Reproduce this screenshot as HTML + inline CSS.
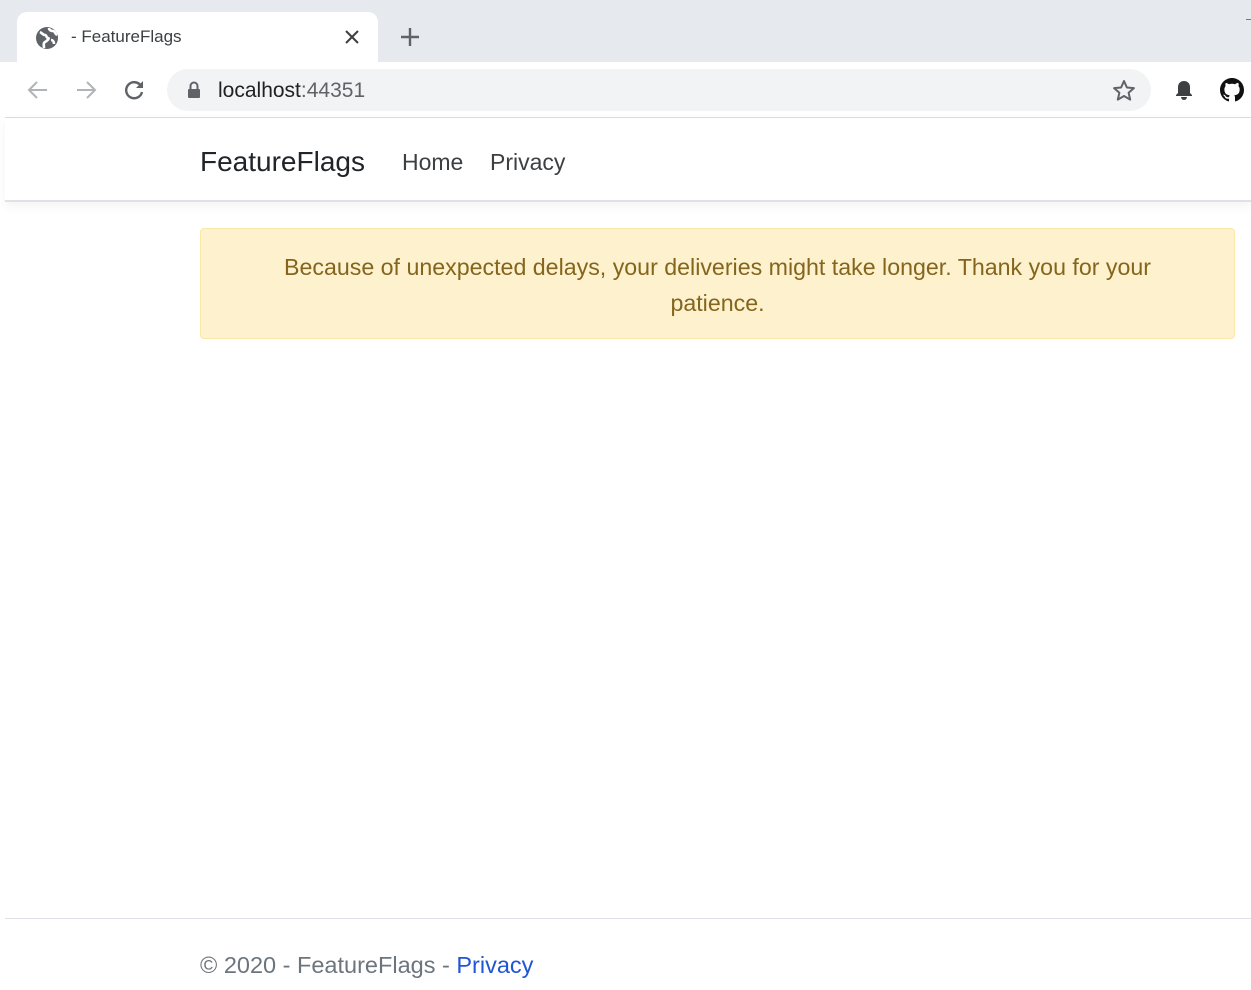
<!DOCTYPE html>
<html><head><meta charset="utf-8"><style>
*{margin:0;padding:0;box-sizing:border-box}
body{width:1251px;height:990px;background:#fff;font-family:"Liberation Sans",sans-serif;position:relative;overflow:hidden}
.top{position:absolute;left:0;top:0;width:1251px;height:62px;background:#e6e9ed}
.tab{position:absolute;left:17px;top:12px;width:361px;height:52px;background:#fff;border-radius:10px 10px 0 0}
.tab .t{position:absolute;left:54px;top:15px;font-size:17px;color:#3c4043}
.abs{position:absolute}
.omni{position:absolute;left:167px;top:69px;width:984px;height:42px;background:#f1f3f4;border-radius:21px}
.url{position:absolute;left:218px;top:79px;font-size:21px;color:#202124}
.url span{color:#5f6368}
.hr1{position:absolute;left:5px;top:117px;width:1246px;height:1px;background:#dadce0}
.nav{position:absolute;left:5px;top:118px;width:1246px;height:84px;border-bottom:2px solid #dee2e6;box-shadow:0 4px 10px rgba(0,0,0,.05)}
.brand{position:absolute;left:200px;top:146px;font-size:28px;color:#212529}
.nl{position:absolute;top:149px;font-size:23px;color:#3c4043}
.alert{position:absolute;left:200px;top:228px;width:1035px;height:111px;background:#fdf2cd;border:1px solid #fbe7a8;border-radius:4px;color:#85651d;font-size:23.2px;text-align:center;line-height:36px;padding:20px 60px 0}
.fhr{position:absolute;left:5px;top:918px;width:1246px;height:1px;background:#dee2e6}
.foot{position:absolute;left:200px;top:952px;font-size:23.5px;color:#6c757d}
.foot a{color:#1e56d6;text-decoration:none}
</style></head><body>
<div class="top"></div>
<div class="abs" style="left:1246px;top:19px;width:5px;height:1px;background:#777"></div>
<div class="tab">
<svg class="abs" style="left:18px;top:14px" width="24" height="24" viewBox="0 0 24 24"><circle cx="12" cy="12" r="11" fill="#5f6368"/><path d="M5 6c2 1 3 3 5 3s1 3 3 3-1 3-3 4-1 4-1 6M14 2c0 2 2 3 4 3s2 3 4 4M16 14c2 0 3 2 3 4" stroke="#fff" stroke-width="2.6" fill="none"/></svg>
<div class="t">- FeatureFlags</div>
<svg class="abs" style="left:328px;top:18px" width="14" height="14"><path d="M1 1l12 12M13 1L1 13" stroke="#3c4043" stroke-width="2"/></svg>
</div>
<svg class="abs" style="left:400px;top:27px" width="20" height="20"><path d="M10 1v18M1 10h18" stroke="#5f6368" stroke-width="2.4"/></svg>
<svg class="abs" style="left:27px;top:79px" width="22" height="22"><path d="M20 11H3M10 3l-8 8 8 8" stroke="#b0b3b7" stroke-width="2" fill="none"/></svg>
<svg class="abs" style="left:75px;top:79px" width="22" height="22"><path d="M2 11h17M12 3l8 8-8 8" stroke="#b0b3b7" stroke-width="2" fill="none"/></svg>
<svg class="abs" style="left:123px;top:79px" width="22" height="22"><path d="M18 7A8 8 0 1 0 19 13" stroke="#5f6368" stroke-width="2.4" fill="none"/><path d="M20 2v7h-7z" fill="#5f6368"/></svg>
<div class="omni"></div>
<svg class="abs" style="left:187px;top:81px" width="14" height="18"><path d="M3.5 8V5a3.5 3.5 0 0 1 7 0v3" stroke="#5f6368" stroke-width="2" fill="none"/><rect x="1" y="8" width="12" height="9" rx="1" fill="#5f6368"/></svg>
<div class="url">localhost<span>:44351</span></div>
<svg class="abs" style="left:1112px;top:79px" width="24" height="22" viewBox="0 0 24 22"><path d="M12 2l2.9 6.5 7 .6-5.3 4.6 1.6 6.9L12 17l-6.2 3.6 1.6-6.9L2.1 9.1l7-.6z" stroke="#5f6368" stroke-width="2" fill="none" stroke-linejoin="round"/></svg>
<svg class="abs" style="left:1173px;top:79px" width="22" height="22"><path d="M11 2c-4 0-6 3-6 6v6l-2 2v1h16v-1l-2-2V8c0-3-2-6-6-6z" fill="#3c4043"/><path d="M8 18a3 3 0 0 0 6 0z" fill="#3c4043"/></svg>
<svg class="abs" style="left:1220px;top:78px" width="24" height="24" viewBox="0 0 16 16"><path fill="#111" d="M8 0C3.58 0 0 3.58 0 8c0 3.54 2.290 6.530 5.470 7.590.4.07.55-.17.55-.38 0-.19-.01-.82-.01-1.49-2.01.37-2.53-.49-2.690-.94-.09-.23-.48-.94-.82-1.130-.28-.15-.68-.52-.01-.53.63-.01 1.080.58 1.230.82.72 1.210 1.870.87 2.330.66.07-.52.28-.87.51-1.070-1.780-.2-3.640-.89-3.640-3.950 0-.87.31-1.590.82-2.150-.08-.2-.36-1.020.08-2.120 0 0 .67-.21 2.200.82.64-.18 1.320-.27 2-.27.68 0 1.360.09 2 .27 1.530-1.040 2.200-.82 2.200-.82.44 1.100.16 1.920.08 2.120.51.56.82 1.270.82 2.150 0 3.070-1.870 3.750-3.650 3.950.29.25.54.73.54 1.480 0 1.070-.01 1.930-.01 2.200 0 .21.15.46.55.38A8.013 8.013 0 0016 8c0-4.420-3.580-8-8-8z"/></svg>
<div class="hr1"></div>
<div class="nav"></div>
<div class="brand">FeatureFlags</div>
<div class="nl" style="left:402px">Home</div>
<div class="nl" style="left:490px">Privacy</div>
<div class="alert">Because of unexpected delays, your deliveries might take longer. Thank you for your patience.</div>
<div class="fhr"></div>
<div class="foot">© 2020 - FeatureFlags - <a>Privacy</a></div>
</body></html>
